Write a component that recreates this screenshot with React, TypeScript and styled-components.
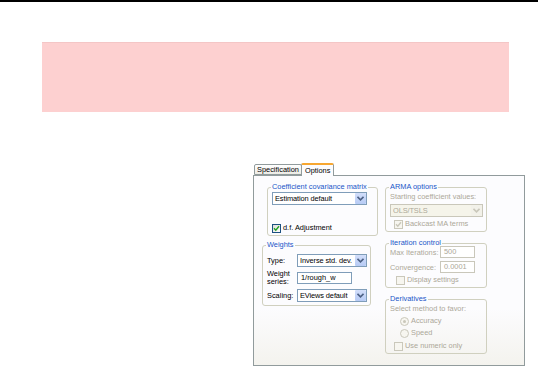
import React from "react";
import styled, { createGlobalStyle } from "styled-components";

const GlobalStyle = createGlobalStyle`
  html, body {
    margin: 0;
    padding: 0;
    background: #ffffff;
  }
  body {
    font-family: "Liberation Sans", Arial, sans-serif;
    width: 538px;
    height: 366px;
    overflow: hidden;
  }
`;

const Page = styled.div`
  display: flex;
  flex-direction: column;
`;

const TopRule = styled.div`
  height: 2px;
  background: #000;
`;

const Banner = styled.div`
  margin: 40px 29px 0 42px;
  height: 69px;
  background: #fdd0d0;
  border-top: 1px solid #f4c6c6;
`;

const Dialog = styled.div`
  margin: 51px 0 0 253px;
  width: 272px;
  display: flex;
  flex-direction: column;
  font-size: 7.4px;
  color: #000;
  white-space: nowrap;
`;

const TabRow = styled.div`
  display: flex;
  align-items: flex-end;
  height: 12px;
  padding-left: 1px;
  position: relative;
  z-index: 1;
`;

const Tab = styled.div<{ $active?: boolean }>`
  box-sizing: border-box;
  height: ${(p) => (p.$active ? "13px" : "11px")};
  padding: 0 ${(p) => (p.$active ? "3px" : "2px")};
  margin-bottom: ${(p) => (p.$active ? "-1px" : "0")};
  display: flex;
  align-items: center;
  border: 1px solid #919b9c;
  border-bottom: ${(p) => (p.$active ? "none" : "1px solid #919b9c")};
  border-top: ${(p) => (p.$active ? "2px solid #f7a731" : "1px solid #919b9c")};
  border-radius: 2px 2px 0 0;
  background: ${(p) =>
    p.$active ? "#fcfcfe" : "linear-gradient(#ffffff, #ecebe5)"};
  line-height: 8px;
  margin-left: ${(p) => (p.$active ? "-1px" : "0")};
`;

const Pane = styled.div`
  box-sizing: border-box;
  height: 191px;
  border: 1px solid #919b9c;
  background: linear-gradient(#fcfcfe 70%, #f4f3ee);
  display: grid;
  grid-template-columns: 124px 102px;
  column-gap: 3px;
  padding: 6px 0 0 4px;
  align-items: start;
`;

const Column = styled.div<{ $gap: number }>`
  display: flex;
  flex-direction: column;
  gap: ${(p) => p.$gap}px;
`;

const Group = styled.fieldset<{ $indent?: number; $width: number }>`
  box-sizing: border-box;
  margin: 0 0 0 ${(p) => p.$indent ?? 0}px;
  width: ${(p) => p.$width}px;
  border: 1px solid #d0d0bf;
  border-radius: 3px;
  padding: 0 3px 2px 4px;
  min-width: 0;
`;

const Legend = styled.legend`
  color: #2056c8;
  padding: 0 1px;
  margin-left: -1px;
  line-height: 10px;
  white-space: nowrap;
`;

const SelectBox = styled.div<{ $disabled?: boolean; $width?: number }>`
  box-sizing: border-box;
  width: ${(p) => (p.$width ? `${p.$width}px` : "100%")};
  height: 13px;
  border: 1px solid ${(p) => (p.$disabled ? "#c9c7ba" : "#7f9db9")};
  background: ${(p) => (p.$disabled ? "#f5f4ea" : "#fff")};
  color: ${(p) => (p.$disabled ? "#aca899" : "#000")};
  display: flex;
  align-items: center;
  justify-content: space-between;
  padding-left: 2px;
  line-height: 11px;
  overflow: hidden;
`;

const SelectText = styled.span`
  overflow: hidden;
  flex: 1;
  letter-spacing: -0.1px;
`;

const ArrowButton = styled.div<{ $disabled?: boolean }>`
  box-sizing: border-box;
  flex: none;
  width: 11px;
  height: 11px;
  background: ${(p) =>
    p.$disabled ? "#f2f1e9" : "linear-gradient(#d2defa, #b7cbf5)"};
  border-radius: 1px;
  display: flex;
  align-items: center;
  justify-content: center;
`;

const TextBox = styled.div<{ $disabled?: boolean; $width?: number }>`
  box-sizing: border-box;
  width: ${(p) => (p.$width ? `${p.$width}px` : "100%")};
  height: 12px;
  border: 1px solid ${(p) => (p.$disabled ? "#c9c7ba" : "#7f9db9")};
  background: #fff;
  color: ${(p) => (p.$disabled ? "#aca899" : "#000")};
  padding-left: 3px;
  line-height: 10px;
`;

const CheckRow = styled.div<{ $disabled?: boolean; $indent?: number; $top?: number }>`
  display: flex;
  align-items: center;
  gap: 2px;
  margin: ${(p) => p.$top ?? 0}px 0 0 ${(p) => p.$indent ?? 0}px;
  color: ${(p) => (p.$disabled ? "#aca899" : "#000")};
  line-height: 10px;
`;

const CheckBox = styled.div<{ $disabled?: boolean }>`
  box-sizing: border-box;
  width: 9px;
  height: 9px;
  border: 1px solid ${(p) => (p.$disabled ? "#cac8bb" : "#1c5180")};
  background: ${(p) =>
    p.$disabled ? "#f7f6f0" : "linear-gradient(135deg, #dcdcd7, #fff)"};
  display: flex;
  align-items: center;
  justify-content: center;
`;

const Radio = styled.div<{ $checked?: boolean }>`
  box-sizing: border-box;
  width: 9px;
  height: 9px;
  border-radius: 50%;
  border: 1px solid #cac8bb;
  background: #f7f6f0;
  display: flex;
  align-items: center;
  justify-content: center;
  &::after {
    content: "";
    display: ${(p) => (p.$checked ? "block" : "none")};
    width: 3px;
    height: 3px;
    border-radius: 50%;
    background: #c9c7ba;
  }
`;

const Note = styled.div<{ $disabled?: boolean }>`
  color: ${(p) => (p.$disabled ? "#aca899" : "#000")};
  line-height: 10px;
`;

const Spaced = styled.div<{ $top: number }>`
  margin-top: ${(p) => p.$top}px;
`;

const WeightGrid = styled.div`
  display: grid;
  grid-template-columns: 30px 70px;
  row-gap: 3px;
  align-items: center;
  margin-top: 4px;
  padding-bottom: 1px;
`;

const FieldLabel = styled.div`
  line-height: 8px;
`;

const IterGrid = styled.div`
  display: grid;
  grid-template-columns: 50px 35px;
  row-gap: 3px;
  align-items: center;
  color: #aca899;
  margin-top: -2px;
`;

const Chevron: React.FC<{ disabled?: boolean }> = ({ disabled }) => (
  <svg width="7" height="5" viewBox="0 0 7 5">
    <path
      d="M0.5 0.8 L3.5 3.8 L6.5 0.8"
      fill="none"
      stroke={disabled ? "#c9c7ba" : "#4d6185"}
      strokeWidth="1.6"
    />
  </svg>
);

const Check: React.FC<{ disabled?: boolean }> = ({ disabled }) => (
  <svg width="7" height="7" viewBox="0 0 7 7">
    <path
      d="M1 3.2 L2.8 5.2 L6 1.2"
      fill="none"
      stroke={disabled ? "#c9c7ba" : "#21a121"}
      strokeWidth="1.4"
    />
  </svg>
);

const Dropdown: React.FC<{ value: string; disabled?: boolean; width?: number }> = ({
  value,
  disabled,
  width,
}) => (
  <SelectBox $disabled={disabled} $width={width}>
    <SelectText>{value}</SelectText>
    <ArrowButton $disabled={disabled}>
      <Chevron disabled={disabled} />
    </ArrowButton>
  </SelectBox>
);

const App: React.FC = () => {
  return (
    <Page>
      <GlobalStyle />
      <TopRule />
      <Banner />
      <Dialog>
        <TabRow>
          <Tab>Specification</Tab>
          <Tab $active>Options</Tab>
        </TabRow>
        <Pane>
          <Column $gap={4}>
            <Group $indent={9} $width={111}>
              <Legend>Coefficient covariance matrix</Legend>
              <Dropdown value="Estimation default" width={95} />
              <CheckRow $top={18}>
                <CheckBox>
                  <Check />
                </CheckBox>
                <span>d.f. Adjustment</span>
              </CheckRow>
            </Group>
            <Group $indent={4} $width={109}>
              <Legend>Weights</Legend>
              <WeightGrid>
                <FieldLabel>Type:</FieldLabel>
                <Dropdown value="Inverse std. dev." />
                <FieldLabel>
                  Weight
                  <br />
                  series:
                </FieldLabel>
                <TextBox $width={55}>1/rough_w</TextBox>
                <FieldLabel>Scaling:</FieldLabel>
                <Dropdown value="EViews default" />
              </WeightGrid>
            </Group>
          </Column>
          <Column $gap={6}>
            <Group $width={102}>
              <Legend>ARMA options</Legend>
              <Note $disabled>Starting coefficient values:</Note>
              <Spaced $top={2}>
                <Dropdown value="OLS/TSLS" disabled />
              </Spaced>
              <CheckRow $disabled $indent={4} $top={2}>
                <CheckBox $disabled>
                  <Check disabled />
                </CheckBox>
                <span>Backcast MA terms</span>
              </CheckRow>
            </Group>
            <Group $width={102}>
              <Legend>Iteration control</Legend>
              <IterGrid>
                <span>Max Iterations:</span>
                <TextBox $disabled>500</TextBox>
                <span>Convergence:</span>
                <TextBox $disabled>0.0001</TextBox>
              </IterGrid>
              <CheckRow $disabled $indent={6} $top={2}>
                <CheckBox $disabled />
                <span>Display settings</span>
              </CheckRow>
            </Group>
            <Group $width={102}>
              <Legend>Derivatives</Legend>
              <Note $disabled>Select method to favor:</Note>
              <CheckRow $disabled $indent={10} $top={2}>
                <Radio $checked />
                <span>Accuracy</span>
              </CheckRow>
              <CheckRow $disabled $indent={10} $top={2}>
                <Radio />
                <span>Speed</span>
              </CheckRow>
              <CheckRow $disabled $indent={4} $top={3}>
                <CheckBox $disabled />
                <span>Use numeric only</span>
              </CheckRow>
            </Group>
          </Column>
        </Pane>
      </Dialog>
    </Page>
  );
};

export default App;
